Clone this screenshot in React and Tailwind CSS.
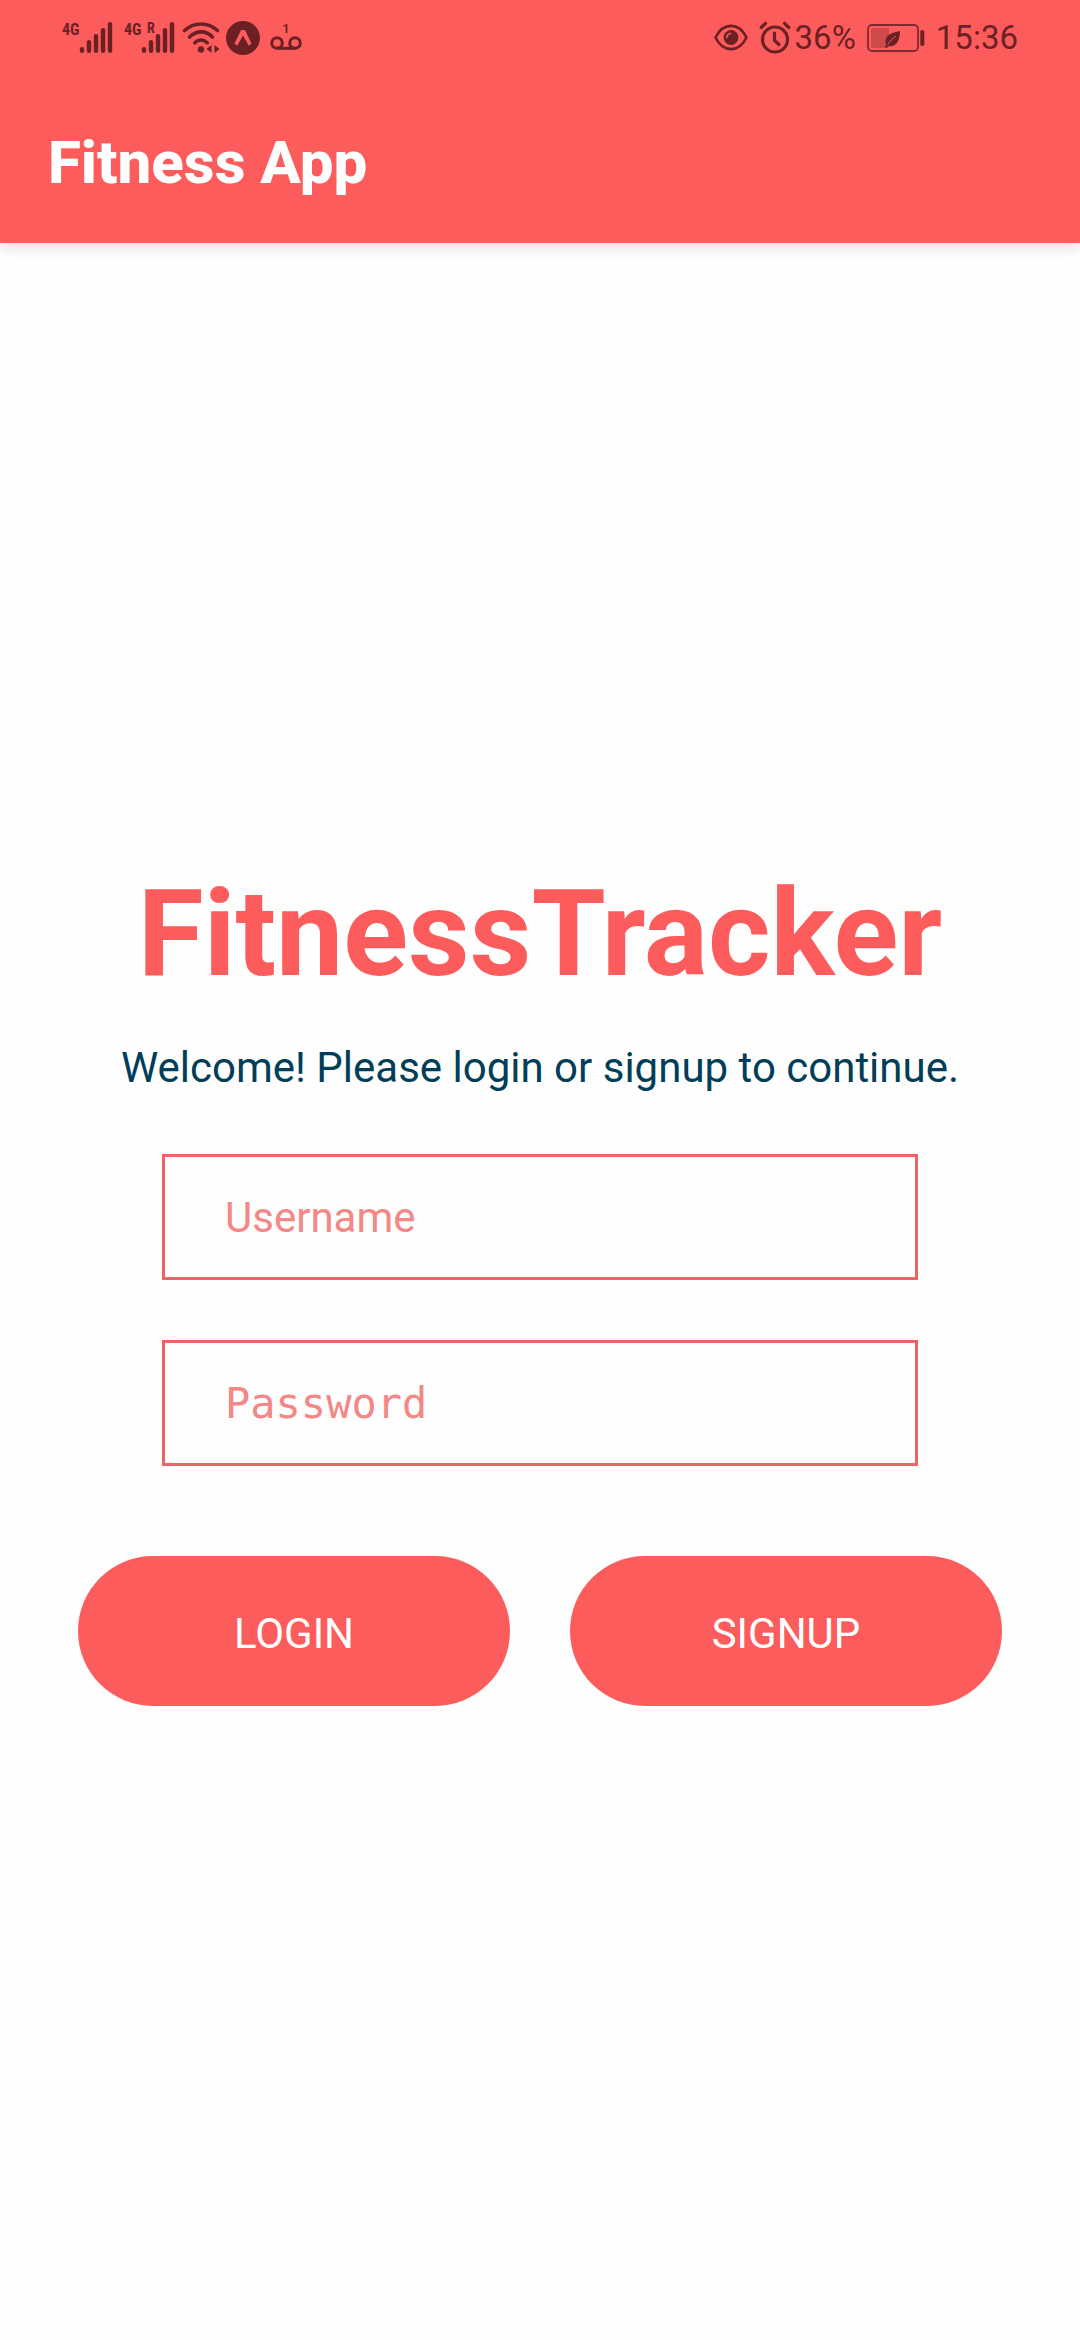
const BARS = [
  { x: 19, y: 26 },
  { x: 26, y: 19 },
  { x: 33, y: 13 },
  { x: 40, y: 7 },
  { x: 47, y: 1 },
];

function Signal({ roaming }) {
  return (
    <svg
      viewBox="0 0 52 34"
      className="h-[34px] w-[52px] overflow-visible fill-current"
      role="img"
      aria-label={roaming ? "4G roaming signal" : "4G signal"}
    >
      <text x="0" y="14" className="font-['Roboto_Condensed','Liberation_Sans_Narrow',Roboto,sans-serif] text-[16px] font-bold">
        4G
      </text>
      {roaming && (
        <text x="23" y="12" className="font-['Roboto_Condensed','Liberation_Sans_Narrow',Roboto,sans-serif] text-[14px] font-bold">
          R
        </text>
      )}
      {BARS.map((bar) => (
        <rect key={bar.x} x={bar.x - 1.2} y={bar.y} width="4.4" height={32 - bar.y} rx="2.2" />
      ))}
    </svg>
  );
}

function WifiIcon() {
  return (
    <svg viewBox="0 0 38 34" className="h-[34px] w-[38px]" fill="none" stroke="currentColor" strokeWidth="3.6" strokeLinecap="round" role="img" aria-label="Wi-Fi">
      <path d="M2.5 9.5C12 0.8 26 0.8 35.500 9.500" />
      <path d="M7.500 16C14.500 9.200 24 9.200 30.500 16" />
      <path d="M12.800 21.800C16.500 18.200 21.500 18.200 25.200 21.800" />
      <circle cx="19" cy="28.500" r="3.200" fill="currentColor" stroke="none" />
      <path d="M29.500 24v8l-5-4zM32.500 24v8l5-4z" fill="currentColor" stroke="none" />
    </svg>
  );
}

function ExpoIcon() {
  return (
    <svg viewBox="0 0 34 34" className="h-[34px] w-[34px]" role="img" aria-label="Expo">
      <circle cx="17" cy="17" r="17" fill="currentColor" />
      <path d="M15 9h4l6.500 13.500-2.700 2.200L17 14.500 11.200 24.700l-2.700-2.200z" fill="#fd5c5c" />
    </svg>
  );
}

function VoicemailIcon() {
  return (
    <svg viewBox="0 0 32 34" className="h-[34px] w-[32px]" role="img" aria-label="1 voicemail">
      <text x="16" y="12" textAnchor="middle" fill="currentColor" className="font-['Roboto',sans-serif] text-[12px] font-bold">
        1
      </text>
      <g fill="none" stroke="currentColor" strokeWidth="3">
        <circle cx="7" cy="22" r="5.300" />
        <circle cx="25" cy="22" r="5.300" />
        <path d="M7 27.300h18" />
      </g>
    </svg>
  );
}

function EyeIcon() {
  return (
    <svg viewBox="0 0 34 34" className="h-[34px] w-[34px]" role="img" aria-label="Eye comfort">
      <path d="M1.500 16.500C9 1 25 1 32.500 16.500C25 32 9 32 1.500 16.500z" fill="none" stroke="currentColor" strokeWidth="2.600" strokeLinejoin="round" />
      <circle cx="17" cy="16.500" r="7.400" fill="currentColor" />
      <path d="M12.800 16.500A4.300 4.300 0 0 1 16.500 12.500" fill="none" stroke="#fd5c5c" strokeWidth="1.600" strokeLinecap="round" />
    </svg>
  );
}

function AlarmIcon() {
  return (
    <svg viewBox="0 0 32 34" className="h-[34px] w-[32px]" fill="none" stroke="currentColor" strokeWidth="3.200" strokeLinecap="round" role="img" aria-label="Alarm">
      <circle cx="16" cy="18.500" r="12.500" />
      <path d="M2.200 6.500L6.500 2.300M29.800 6.500L25.500 2.300" />
      <path d="M15.500 12v7.500l4.500 4" strokeLinejoin="round" />
    </svg>
  );
}

function BatteryIcon() {
  return (
    <svg viewBox="0 0 58 34" className="h-[34px] w-[58px]" role="img" aria-label="Battery saver on">
      <rect x="1" y="4" width="50" height="26" rx="4" fill="none" stroke="currentColor" strokeWidth="1.800" strokeOpacity="0.850" />
      <rect x="4" y="7" width="18" height="20" rx="1" fill="currentColor" fillOpacity="0.300" />
      <path d="M33 10C24 11.500 18.500 14.500 18.500 20.500C18.500 22 18.800 22.900 19.200 23.800L18 26.500L19.800 26.800L21 25C29 26.500 33 20 33 10z" fill="currentColor" />
      <path d="M20.500 24C23 20 25.500 17.500 29 15" fill="none" stroke="#fd5c5c" strokeWidth="0.900" />
      <rect x="53.300" y="9" width="4" height="16" rx="1.800" fill="currentColor" />
    </svg>
  );
}

function StatusBar() {
  return (
    <div className="flex items-center justify-between px-[62px] pt-[18px] pb-[25px] text-[33px] leading-10 text-[#6b2124]">
      <div className="flex items-center gap-1.5">
        <div className="flex gap-2.5">
          <Signal />
          <Signal roaming />
        </div>
        <WifiIcon />
        <ExpoIcon />
        <div className="pl-1">
          <VoicemailIcon />
        </div>
      </div>
      <div className="flex items-center gap-[11px]">
        <EyeIcon />
        <div className="flex items-center gap-1">
          <AlarmIcon />
          <span>36%</span>
        </div>
        <BatteryIcon />
        <span>15:36</span>
      </div>
    </div>
  );
}

function Field({ id, label, type, className }) {
  return (
    <input
      id={id}
      type={type}
      aria-label={label}
      placeholder={label}
      className={`block w-full border-3 border-[#ea6565] bg-transparent px-[60px] pt-9 pb-[34px] text-[42px] leading-[50px] text-[#fd5c5c] placeholder:text-[#f48886] placeholder:opacity-100 focus:outline-none ${className}`}
    />
  );
}

function PillButton({ children, type }) {
  return (
    <button
      type={type}
      className="w-2/5 rounded-full bg-[#fd5c5c] pt-[53px] pb-[47px] text-[42px] leading-[50px] text-white"
    >
      {children}
    </button>
  );
}

export default function App() {
  return (
    <div className="flex min-h-screen flex-col bg-[#fefefe] font-['Roboto',sans-serif]">
      <header className="bg-[#fd5c5c] shadow-[0_3px_14px_rgba(0,0,0,0.14)]">
        <StatusBar />
        <h1 className="px-12 py-11 text-[60px] leading-[72px] font-extrabold text-white">Fitness App</h1>
      </header>
      <main className="flex flex-1 flex-col items-center justify-center pb-[14px]">
        <h2 className="text-[120px] leading-[141px] font-bold text-[#fd5c5c]">FitnessTracker</h2>
        <p className="pt-[38px] text-[42px] leading-[50px] text-[#023e58]">
          Welcome! Please login or signup to continue.
        </p>
        <form className="flex w-full flex-col items-center gap-[90px] pt-[61px]" onSubmit={(e) => e.preventDefault()}>
          <div className="flex w-7/10 flex-col gap-[60px]">
            <Field id="username" label="Username" type="text" className="font-['Roboto',sans-serif]" />
            <Field id="password" label="Password" type="password" className="font-['DejaVu_Sans_Mono',monospace]" />
          </div>
          <div className="flex w-full justify-center gap-[60px]">
            <PillButton type="submit">LOGIN</PillButton>
            <PillButton type="button">SIGNUP</PillButton>
          </div>
        </form>
      </main>
    </div>
  );
}
